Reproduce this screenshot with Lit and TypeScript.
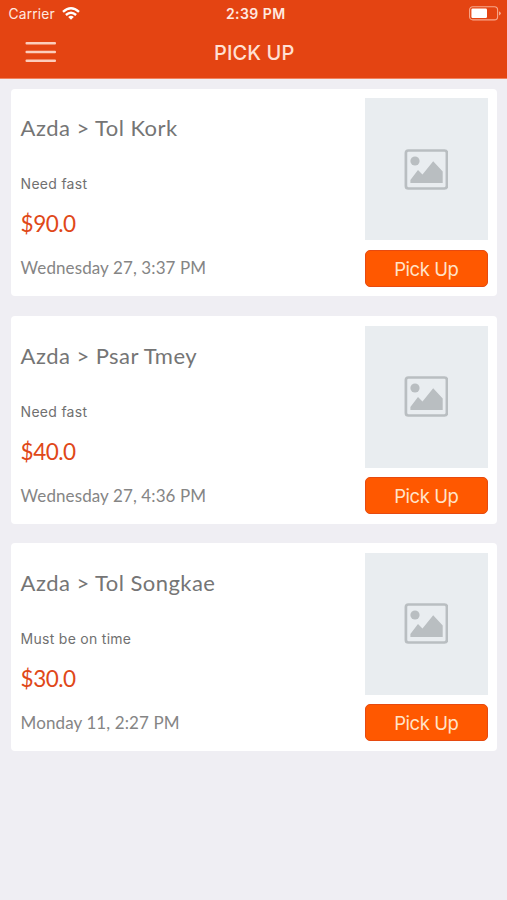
import { LitElement, html, css } from "lit";
import { customElement, property } from "lit/decorators.js";

interface Job {
  route: string;
  note: string;
  price: string;
  date: string;
}

const JOBS: Job[] = [
  { route: "Azda > Tol Kork", note: "Need fast", price: "$90.0", date: "Wednesday 27, 3:37 PM" },
  { route: "Azda > Psar Tmey", note: "Need fast", price: "$40.0", date: "Wednesday 27, 4:36 PM" },
  { route: "Azda > Tol Songkae", note: "Must be on time", price: "$30.0", date: "Monday 11, 2:27 PM" },
];

@customElement("status-bar")
class StatusBar extends LitElement {
  static styles = css`
    :host {
      display: grid;
      grid-template-columns: 1fr auto 1fr;
      align-items: center;
      height: 28px;
      padding: 0 6px 0 8.5px;
      color: #ffe9e0;
      font: 400 13.8px/28px Inter, "Liberation Sans", sans-serif;
    }
    .carrier { display: flex; align-items: center; gap: 7px; letter-spacing: 0.15px; }
    .time { font-weight: 600; font-size: 14px; letter-spacing: 0.45px; padding-left: 2px; }
    .battery { justify-self: end; }
    svg { display: block; margin-bottom: 1px; }
  `;

  render() {
    return html`
      <div class="carrier">
        <span>Carrier</span>
        <svg width="18" height="13" viewBox="0 0 18 13" fill="none" stroke="#fff" stroke-width="2.4">
          <path d="M1 4.8Q9-2.2 17 4.8" />
          <path d="M3.9 8Q9 3.4 14.1 8" />
          <path d="M9 12.8L6.2 9.9Q9 7.6 11.8 9.9Z" fill="#fff" stroke="none" />
        </svg>
      </div>
      <span class="time">2:39 PM</span>
      <svg class="battery" width="32" height="15" viewBox="0 0 32 15">
        <rect x=".6" y=".7" width="28" height="13.2" rx="3.2" fill="none" stroke="#f7a88d" stroke-width="1.1" />
        <rect x="2.4" y="2.6" width="15.6" height="9.4" rx="1.2" fill="#fff" />
        <path d="M30 5.2Q31.8 6 31.8 7.3T30 9.4Z" fill="#f7a88d" />
      </svg>
    `;
  }
}

@customElement("nav-bar")
class NavBar extends LitElement {
  static styles = css`
    :host {
      display: grid;
      grid-template-columns: 1fr auto 1fr;
      align-items: center;
      height: 50px;
      padding: 0 25px;
    }
    .menu { display: block; margin-bottom: 2px; }
    .title {
      color: #ffe0d4;
      font: 500 20px/24px Inter, "Liberation Sans", sans-serif;
      letter-spacing: 0.1px;
      padding-left: 1.5px;
      padding-bottom: 1px;
    }
  `;

  render() {
    return html`
      <svg class="menu" width="31" height="22" viewBox="0 0 31 22" fill="#fccdbc">
        <rect x=".5" y="1" width="30.5" height="2.5" rx="1" />
        <rect x=".5" y="9.7" width="30.5" height="2.5" rx="1" />
        <rect x=".5" y="18.4" width="30.5" height="2.5" rx="1" />
      </svg>
      <span class="title">PICK UP</span>
    `;
  }
}

@customElement("job-card")
class JobCard extends LitElement {
  static styles = css`
    :host {
      display: flex;
      justify-content: space-between;
      box-sizing: border-box;
      height: 207.6px;
      padding: 9.7px 9.5px 9.5px 9.6px;
      border-radius: 4px;
      background: #fff;
      font-family: Lato, "Open Sans", sans-serif;
      white-space: nowrap;
    }
    .info { display: flex; flex-direction: column; }
    .route { margin-top: 16px; font-size: 22px; line-height: 28px; color: #757575; letter-spacing: 0.45px; }
    .note { margin-top: 32px; font: 400 14px/20px Inter, "Liberation Sans", sans-serif; color: #707070; letter-spacing: 0.28px; }
    .price { margin-top: 16px; font-size: 22.5px; line-height: 28px; color: #e04818; letter-spacing: -0.5px; }
    .date { margin-top: 18px; font-size: 17px; line-height: 24px; color: #858585; letter-spacing: 0.1px; }
    .side { display: flex; flex-direction: column; gap: 9.5px; width: 122.5px; }
    .photo { display: grid; place-items: center; height: 142px; background: #e9edf0; }
    .pick {
      box-sizing: border-box;
      height: 37px;
      padding: 1px 0 0;
      border: 1px solid #e64a10;
      border-radius: 5px;
      background: #ff5800;
      color: #ffe3c8;
      font: 400 18.5px/34px Inter, "Liberation Sans", sans-serif;
      letter-spacing: -0.45px;
    }
  `;

  @property({ attribute: false }) job!: Job;

  render() {
    const { route, note, price, date } = this.job;
    return html`
      <div class="info">
        <span class="route">${route}</span>
        <span class="note">${note}</span>
        <span class="price">${price}</span>
        <span class="date">${date}</span>
      </div>
      <div class="side">
        <div class="photo">
          <svg width="44" height="41" viewBox="0 0 44 41" fill="#b9bec1">
            <rect x="1.9" y="1.5" width="41" height="38" rx="2.5" fill="none" stroke="#b9bec1" stroke-width="2.7" />
            <circle cx="11" cy="12" r="4.6" />
            <path d="M6.4 34V31L14 21L18.5 25.5L29.2 12.3L38.7 22.5V34Z" />
          </svg>
        </div>
        <button class="pick">Pick Up</button>
      </div>
    `;
  }
}

@customElement("app-root")
class AppRoot extends LitElement {
  static styles = css`
    :host { display: block; min-height: 900px; background: #efeef3; }
    .header { height: 78px; background: #e44412; border-bottom: 1px solid #f0835f; }
    .list { display: flex; flex-direction: column; gap: 19.7px; padding: 9.7px 10px 0 11px; }
  `;

  render() {
    return html`
      <div class="header">
        <status-bar></status-bar>
        <nav-bar></nav-bar>
      </div>
      <div class="list">${JOBS.map((job) => html`<job-card .job=${job}></job-card>`)}</div>
    `;
  }
}
